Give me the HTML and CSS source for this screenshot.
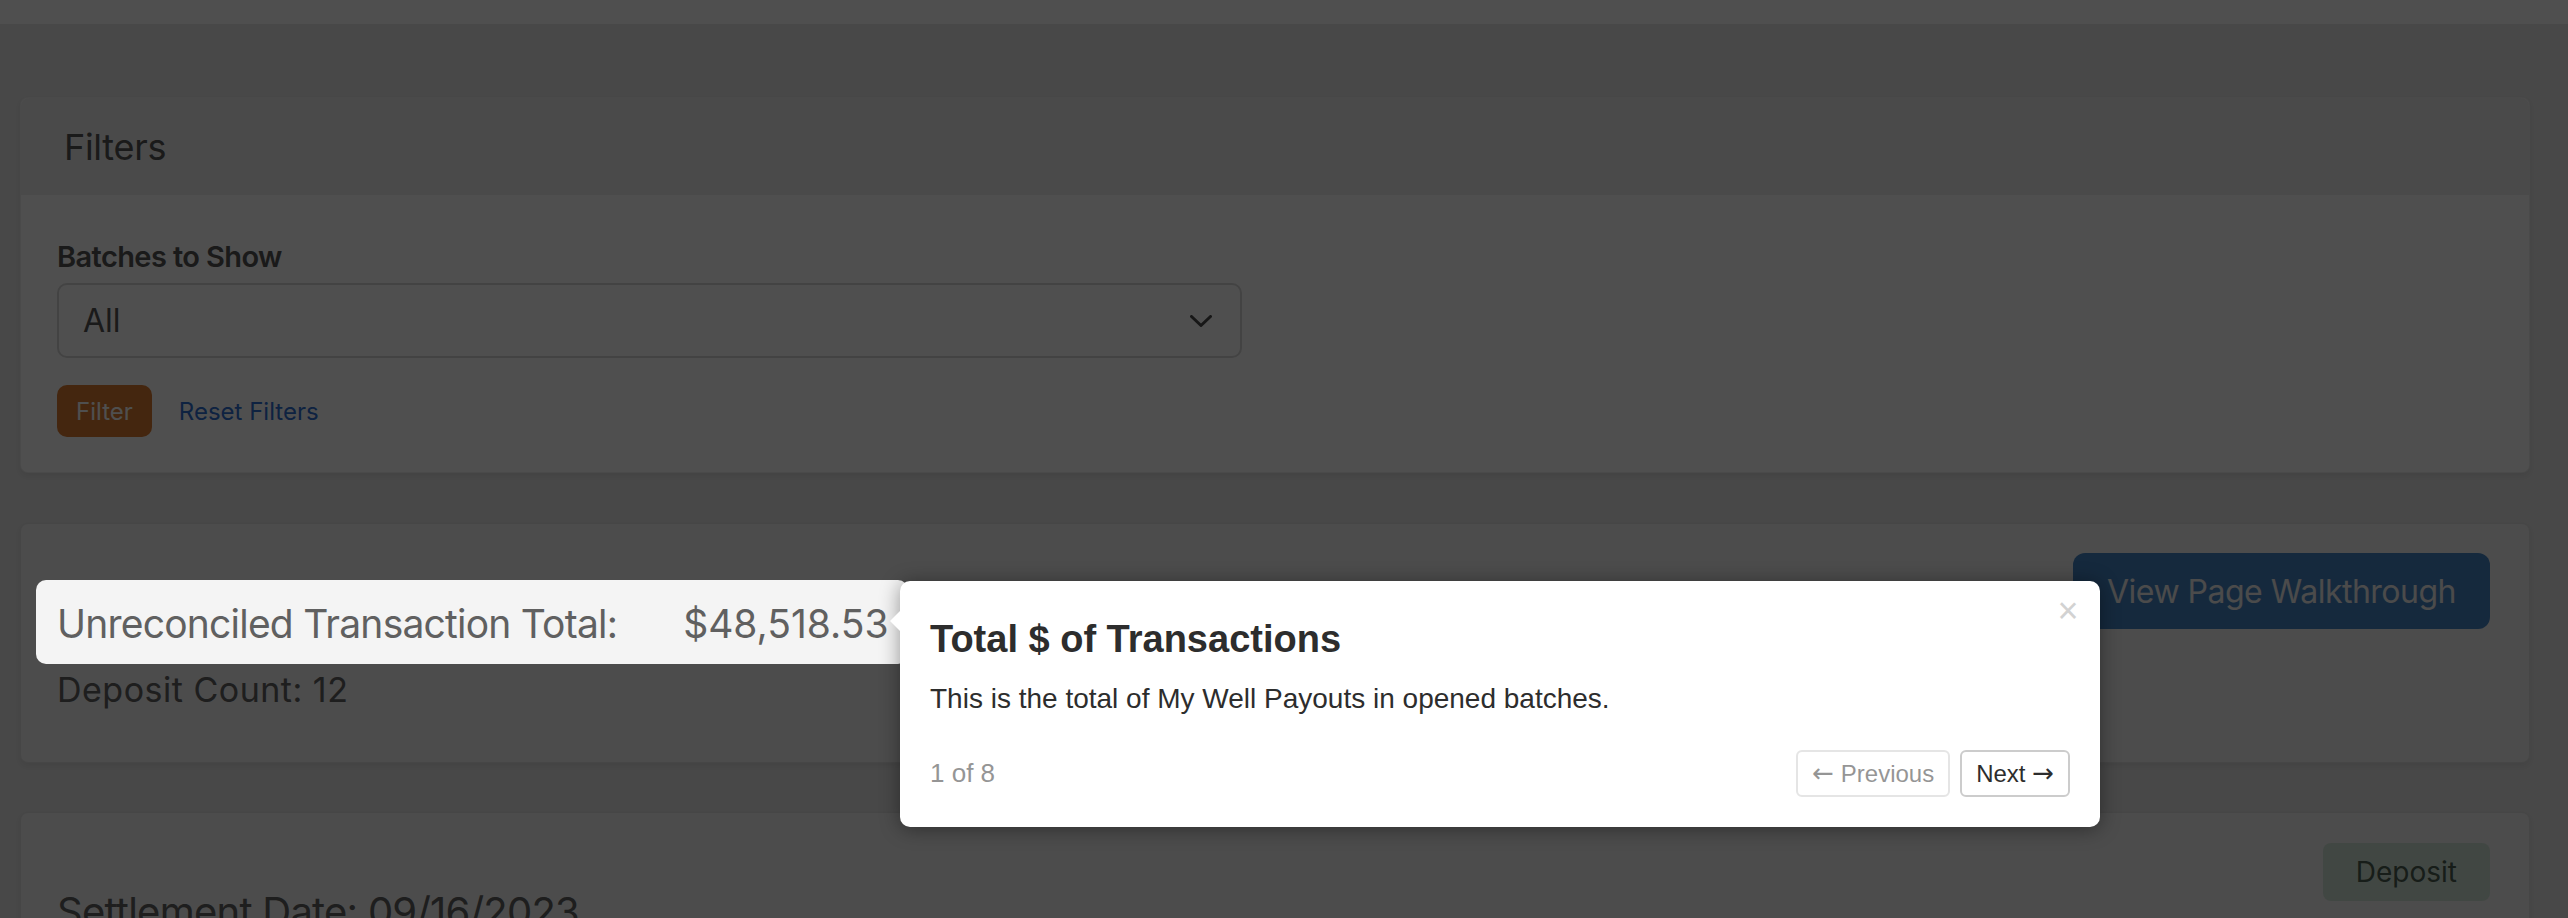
FILE: index.html
```html
<!DOCTYPE html>
<html lang="en">
<head>
<meta charset="utf-8">
<title>Unreconciled Transactions</title>
<link rel="stylesheet" href="styles.css">
</head>
<body>
<header class="topbar"></header>

<main class="page">
  <section class="card filters">
    <div class="card-header">
      <h2 class="card-title">Filters</h2>
    </div>
    <form class="card-body filter-form">
      <label class="field-label" for="batches">Batches to Show</label>
      <div class="select" id="batches">
        <span class="select-value">All</span>
        <svg class="select-chevron" viewBox="0 0 22 12" aria-hidden="true"><path d="M1.5 1.5 L11 10.5 L20.5 1.5"/></svg>
      </div>
      <div class="filter-actions">
        <button class="btn btn-filter" type="button">Filter</button>
        <a class="link-reset" href="#">Reset Filters</a>
      </div>
    </form>
  </section>

  <section class="card summary">
    <div class="summary-stats">
      <div class="summary-total">
        <span class="summary-label">Unreconciled Transaction Total:</span>
        <span class="summary-amount">$48,518.53</span>
      </div>
      <div class="summary-count">Deposit Count: 12</div>
    </div>
    <button class="btn btn-walkthrough" type="button">View Page Walkthrough</button>
  </section>

  <section class="card batch">
    <h3 class="batch-date">Settlement Date: 09/16/2023</h3>
    <span class="badge-deposit">Deposit</span>
  </section>
</main>

<!-- tour: dimmed backdrop with a window around the highlighted total -->
<div class="tour-stage"></div>

<div class="tour-popover" role="dialog" aria-labelledby="tour-title">
  <button class="tour-close" type="button" aria-label="Close">&times;</button>
  <h4 class="tour-title" id="tour-title">Total $ of Transactions</h4>
  <p class="tour-desc">This is the total of My Well Payouts in opened batches.</p>
  <div class="tour-footer">
    <span class="tour-progress">1 of 8</span>
    <div class="tour-nav">
      <button class="tour-btn" type="button" disabled><span class="tour-arrow">&larr;</span> Previous</button>
      <button class="tour-btn" type="button">Next <span class="tour-arrow">&rarr;</span></button>
    </div>
  </div>
</div>
</body>
</html>
```

FILE: styles.css
```css
* { box-sizing: border-box; }

html, body {
  margin: 0;
  height: 100%;
  overflow: hidden;
}

body {
  position: relative;
  background: #e8e8e8;
  font-family: Inter, "Noto Sans", sans-serif;
  color: #606060;
}

.topbar {
  height: 24px;
  background: #ffffff;
}

.page {
  display: flex;
  flex-direction: column;
  gap: 50px;
  padding: 73px 38px 0 20px;
}

/* cards */
.card {
  background: #ffffff;
  border: 1px solid rgba(0, 0, 0, 0.07);
  border-radius: 8px;
  box-shadow: 0 3px 6px rgba(0, 0, 0, 0.08);
}

.card-header {
  height: 97px;
  display: flex;
  align-items: center;
  padding-left: 43px;
  background: #efefef;
  border-radius: 8px 8px 0 0;
}

.card-title {
  margin: 0;
  font-size: 36px;
  font-weight: 400;
  letter-spacing: -0.3px;
  color: #555555;
}

.filter-form {
  display: flex;
  flex-direction: column;
  align-items: flex-start;
  padding: 44px 40px 35px 36px;
}

.field-label {
  font-size: 29px;
  line-height: 36px;
  font-weight: 600;
  letter-spacing: -0.6px;
  color: #555555;
  margin-bottom: 8px;
}

.select {
  width: 1185px;
  height: 75px;
  display: flex;
  align-items: center;
  justify-content: space-between;
  padding: 0 28px 0 24px;
  border: 2px solid #d8d8d8;
  border-radius: 10px;
  background: #ffffff;
}

.select-value {
  font-size: 32px;
  color: #555555;
}

.select-chevron {
  width: 22px;
  height: 12px;
  fill: none;
  stroke: #4a4a4a;
  stroke-width: 3;
  stroke-linecap: round;
  stroke-linejoin: round;
}

.filter-actions {
  display: flex;
  align-items: center;
  gap: 27px;
  margin-top: 27px;
}

.btn {
  border: 0;
  font-family: inherit;
  cursor: pointer;
}

.btn-filter {
  height: 52px;
  padding: 0 19px;
  border-radius: 10px;
  background: #db7b30;
  color: #ffffff;
  font-size: 24px;
}

.link-reset {
  font-size: 24px;
  color: #2f6fd0;
  text-decoration: none;
}

/* summary */
.summary {
  display: flex;
  justify-content: space-between;
  align-items: flex-start;
  padding: 29px 39px 48px 36px;
  background: #f4f4f4;
}

.summary-stats {
  margin-top: 49px;
}

.summary-total {
  display: flex;
  gap: 66px;
  font-size: 39px;
  line-height: 44px;
  letter-spacing: -0.02em;
}

.summary-amount {
  letter-spacing: 0;
}

.summary-count {
  margin-top: 20px;
  font-size: 34px;
  line-height: 48px;
  letter-spacing: 0.5px;
}

.btn-walkthrough {
  height: 76px;
  padding: 0 34px;
  border-radius: 12px;
  background: #4484c5;
  color: #f0f0f0;
  font-size: 32px;
  letter-spacing: -0.5px;
}

/* batch */
.batch {
  display: flex;
  justify-content: space-between;
  align-items: flex-start;
  margin-top: -1px;
  padding: 30px 39px 40px 36px;
  background: #f4f4f4;
}

.batch-date {
  margin: 45px 0 0;
  font-size: 40px;
  line-height: 48px;
  font-weight: 400;
  letter-spacing: -0.75px;
}

.badge-deposit {
  height: 58px;
  display: flex;
  align-items: center;
  padding: 0 33px;
  border-radius: 8px;
  background: #d2e5d8;
  color: #4c5e50;
  font-size: 28px;
}

/* tour */
.tour-stage {
  position: absolute;
  left: 36px;
  top: 580px;
  width: 872px;
  height: 84px;
  border-radius: 10px;
  box-shadow: 0 0 0 4000px rgba(0, 0, 0, 0.69);
  pointer-events: none;
  z-index: 10;
}

.tour-popover {
  position: absolute;
  left: 900px;
  top: 581px;
  width: 1200px;
  padding: 30px;
  background: #ffffff;
  border-radius: 10px;
  box-shadow: 0 2px 20px rgba(0, 0, 0, 0.4);
  font-family: "Liberation Sans", Arial, sans-serif;
  color: #2d2d2d;
  z-index: 20;
}

.tour-popover::before {
  content: "";
  position: absolute;
  left: -10px;
  top: 30px;
  border-style: solid;
  border-width: 10px 10px 10px 0;
  border-color: transparent #ffffff transparent transparent;
}

.tour-close {
  position: absolute;
  top: 0;
  right: 0;
  width: 64px;
  height: 56px;
  padding: 4px 0 0;
  border: 0;
  background: none;
  font-family: inherit;
  font-size: 36px;
  line-height: 52px;
  color: #d2d2d2;
  cursor: pointer;
}

.tour-title {
  margin: 0;
  font-size: 38px;
  line-height: 1.5;
  font-weight: 700;
}

.tour-desc {
  margin: 10px 0 0;
  font-size: 28px;
  line-height: 1.5;
}

.tour-footer {
  display: flex;
  justify-content: space-between;
  align-items: center;
  margin-top: 30px;
}

.tour-progress {
  font-size: 26px;
  color: #959595;
}

.tour-nav {
  display: flex;
  gap: 10px;
}

.tour-btn {
  padding: 6px 14px;
  border: 2px solid #cccccc;
  border-radius: 6px;
  background: #ffffff;
  color: #2d2d2d;
  font-family: inherit;
  font-size: 24px;
  line-height: 1.3;
  cursor: pointer;
}

.tour-arrow {
  font-family: "DejaVu Sans", sans-serif;
  font-size: 26px;
  line-height: 1;
}

.tour-btn:disabled {
  opacity: 0.5;
  cursor: default;
}
```
